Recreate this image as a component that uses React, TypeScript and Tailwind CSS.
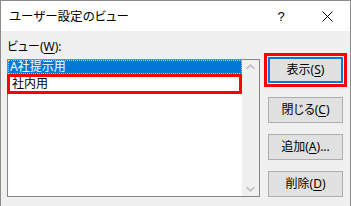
import React from "react";

const font = {
  fontFamily: '"Noto Sans", "Noto Sans CJK JP", sans-serif',
};

function Btn({ label, u, rest, def }: { label: string; u: string; rest: string; def?: boolean }) {
  return (
    <div
      className={`w-[75px] h-[26px] bg-[#e1e1e1] flex items-center justify-center text-[12px] leading-[14px] text-black ${
        def ? "border-2 border-[#0078d7]" : "border border-[#adadad]"
      }`}
    >
      <span>
        {label}(<span className="underline underline-offset-2">{u}</span>){rest}
      </span>
    </div>
  );
}

export default function App() {
  return (
    <div
      className="w-[351px] h-[206px] bg-[#f0f0f0] border-t border-l border-r border-[#8a8a8a] flex flex-col [font-feature-settings:'palt'] overflow-hidden"
      style={font}
    >
      {/* title bar */}
      <div className="h-[30px] bg-white flex items-center shrink-0">
        <div className="pl-[8px] text-[12.5px] leading-[16px] text-black flex-1 pt-[1px]">ユーザー設定のビュー</div>
        <div className="w-[46px] flex justify-center text-[13px] leading-[16px] text-black pt-[1px]" style={{ fontFamily: '"Liberation Sans", sans-serif' }}>
          ?
        </div>
        <div className="w-[46px] flex justify-center pl-[1px]">
          <svg width="11" height="11" viewBox="0 0 11 11">
            <path d="M0.5 0.5 L10.5 10.5 M10.5 0.5 L0.5 10.5" stroke="#000" strokeWidth="1" fill="none" />
          </svg>
        </div>
      </div>

      {/* body */}
      <div className="flex flex-1 pl-[6px] pt-[8px]">
        <div className="flex flex-col">
          <div className="text-[12px] leading-[16px] text-black">
            ビュー(<span className="underline underline-offset-2">W</span>):
          </div>
          <div className="mt-[4px] w-[253px] h-[138px] border border-[#828790] bg-white flex">
            <div className="flex-1 flex flex-col">
              <div className="h-[14px] bg-[#0078d7] border border-dotted border-[#f4b860] text-white text-[12px] leading-[12px] pl-[1px]">
                A社提示用
              </div>
              <div className="-ml-[1px] h-[20px] border-[3px] border-[#ff0000] text-[12px] leading-[14px] text-black pl-[2px]">
                社内用
              </div>
            </div>
            <div className="w-[17px] bg-[#f0f0f0] flex flex-col items-center justify-between py-[4px]">
              <svg width="9" height="6" viewBox="0 0 9 6">
                <path d="M0.5 5 L4.5 1 L8.5 5" stroke="#c0c0c0" strokeWidth="1.6" fill="none" />
              </svg>
              <svg width="9" height="6" viewBox="0 0 9 6">
                <path d="M0.5 1 L4.5 5 L8.5 1" stroke="#c0c0c0" strokeWidth="1.6" fill="none" />
              </svg>
            </div>
          </div>
        </div>

        <div className="flex flex-col ml-[4px] mt-[14px]">
          <div className="border-[3px] border-[#ff0000] p-[1px]">
            <Btn label="表示" u="S" rest="" def />
          </div>
          <div className="ml-[4px] mt-[10px]">
            <Btn label="閉じる" u="C" rest="" />
          </div>
          <div className="ml-[4px] mt-[11px]">
            <Btn label="追加" u="A" rest="..." />
          </div>
          <div className="ml-[4px] mt-[11px]">
            <Btn label="削除" u="D" rest="" />
          </div>
        </div>
      </div>
    </div>
  );
}
